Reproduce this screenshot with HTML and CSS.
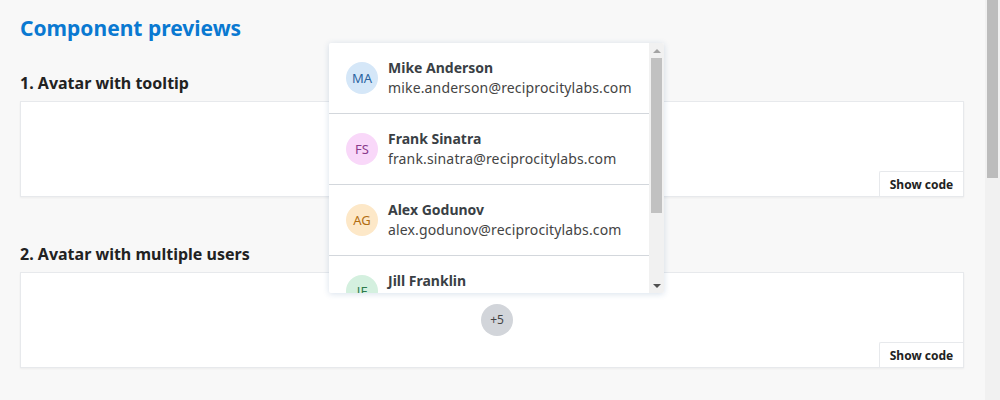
FILE: index.html
```html
<!DOCTYPE html>
<html>
<head>
<meta charset="utf-8">
<link rel="stylesheet" href="styles.css">
</head>
<body>
<div class="page">
  <h1 class="title">Component previews</h1>

  <h2 class="section-title first">1. Avatar with tooltip</h2>
  <div class="card">
    <div class="card-body"></div>
    <div class="card-footer"><button class="show-code">Show code</button></div>
  </div>

  <h2 class="section-title">2. Avatar with multiple users</h2>
  <div class="card">
    <div class="card-body group-body">
      <div class="avatar more">+5</div>
    </div>
    <div class="card-footer"><button class="show-code">Show code</button></div>
  </div>

  <div class="user-menu">
    <div class="user-list">
      <div class="user-item">
        <div class="avatar blue">MA</div>
        <div class="user-text"><div class="user-name">Mike Anderson</div><div class="user-mail">mike.anderson@reciprocitylabs.com</div></div>
      </div>
      <div class="user-item">
        <div class="avatar pink">FS</div>
        <div class="user-text"><div class="user-name">Frank Sinatra</div><div class="user-mail">frank.sinatra@reciprocitylabs.com</div></div>
      </div>
      <div class="user-item">
        <div class="avatar orange">AG</div>
        <div class="user-text"><div class="user-name">Alex Godunov</div><div class="user-mail">alex.godunov@reciprocitylabs.com</div></div>
      </div>
      <div class="user-item">
        <div class="avatar green">JF</div>
        <div class="user-text"><div class="user-name">Jill Franklin</div><div class="user-mail">jill.franklin@reciprocitylabs.com</div></div>
      </div>
    </div>
    <div class="mini-scroll">
      <div class="arrow up"></div>
      <div class="mini-track"><div class="mini-thumb"></div></div>
      <div class="arrow down"></div>
    </div>
  </div>
</div>
<div class="page-scroll"><div class="page-thumb"></div></div>
</body>
</html>
```

FILE: styles.css
```css
html, body {
  margin: 0;
  padding: 0;
}
body {
  background: #f8f8f8;
  font-family: "Noto Sans", "Open Sans", sans-serif;
  color: #222;
  overflow: hidden;
}
.page {
  position: relative;
  padding: 14px 36px 0 20px;
  height: 900px;
}
.title {
  margin: 0;
  font-size: 21px;
  line-height: 28px;
  font-weight: 700;
  color: #0a79d1;
}
.section-title {
  margin: 46px 0 7px;
  font-size: 16px;
  line-height: 22px;
  font-weight: 700;
  color: #222;
}
.section-title.first {
  margin-top: 30px;
}
.card {
  background: #fff;
  border: 1px solid #e7e9ec;
  box-shadow: 0 1px 2px rgba(0, 0, 0, 0.05);
  display: flex;
  flex-direction: column;
  height: 94px;
}
.card-body {
  flex: 1;
  display: flex;
  justify-content: center;
}
.group-body {
  align-items: flex-end;
  padding-left: 10px;
  padding-bottom: 6px;
}
.card-footer {
  display: flex;
  justify-content: flex-end;
}
.show-code {
  font-family: "Noto Sans", "Open Sans", sans-serif;
  font-size: 12px;
  font-weight: 700;
  color: #222;
  background: #fff;
  border: 1px solid #e7e9ec;
  border-right: 0;
  border-bottom: 0;
  border-radius: 2px 0 0 0;
  height: 25px;
  width: 84px;
  padding: 0;
  margin: 0;
}
.avatar {
  width: 32px;
  height: 32px;
  border-radius: 50%;
  flex: none;
  display: flex;
  align-items: center;
  justify-content: center;
  font-size: 13px;
  line-height: 1;
}
.avatar.more {
  background: #d2d5da;
  color: #444;
  font-size: 12px;
}
.avatar.blue { background: #d5e7f8; color: #2b64a0; }
.avatar.pink { background: #f9d8f9; color: #8a3b8c; }
.avatar.orange { background: #fde8c8; color: #b26e12; }
.avatar.green { background: #d4f0df; color: #2e7a4c; }

.user-menu {
  position: absolute;
  left: 329px;
  top: 43px;
  width: 335px;
  height: 250px;
  background: #fff;
  border-radius: 2px;
  box-shadow: 0 1px 6px rgba(40, 90, 150, 0.18);
  display: flex;
  overflow: hidden;
}
.user-list {
  flex: 1;
  overflow: hidden;
}
.user-item {
  display: flex;
  align-items: center;
  gap: 10px;
  padding: 15px 16px 15px 17px;
  border-bottom: 1px solid #d3d7dc;
}
.user-text {
  font-size: 14px;
  line-height: 20px;
  white-space: nowrap;
}
.user-name {
  font-weight: 700;
  color: #3a3f45;
}
.user-mail {
  color: #444;
  letter-spacing: 0.15px;
}
.mini-scroll {
  width: 15px;
  flex: none;
  background: #f1f1f1;
  display: flex;
  flex-direction: column;
}
.arrow {
  height: 15px;
  display: flex;
  align-items: center;
  justify-content: center;
}
.arrow::before {
  content: "";
  width: 0;
  height: 0;
  border-left: 4px solid transparent;
  border-right: 4px solid transparent;
}
.arrow.up::before {
  border-bottom: 4px solid #a3a3a3;
}
.arrow.down::before {
  border-top: 4px solid #505050;
}
.mini-track {
  flex: 1;
  padding: 0 2px;
}
.mini-thumb {
  height: 155px;
  background: #c1c1c1;
}
.page-scroll {
  position: fixed;
  top: 0;
  right: 0;
  width: 15px;
  height: 400px;
  background: #f1f1f1;
  padding: 0 2px;
  box-sizing: border-box;
}
.page-thumb {
  height: 178px;
  background: #bcbcbc;
}
```
